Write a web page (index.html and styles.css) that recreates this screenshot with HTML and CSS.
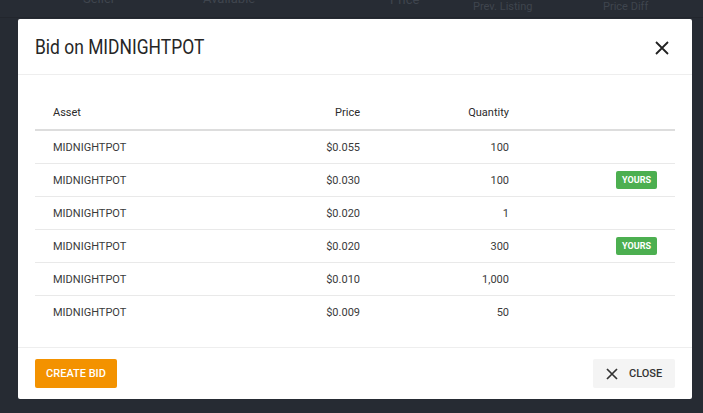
FILE: index.html
```html
<!DOCTYPE html>
<html>
<head>
<meta charset="utf-8">
<link rel="stylesheet" href="styles.css">
</head>
<body>
<div class="bg">
  <div class="bg-head">
    <span class="bh bh-seller">Seller</span>
    <span class="bh bh-avail">Available</span>
    <span class="bh bh-price">Price</span>
    <span class="bh bh-prev">Prev. Listing</span>
    <span class="bh bh-diff">Price Diff</span>
  </div>
</div>
<div class="modal">
  <div class="modal-header">
    <h1 class="title">Bid on MIDNIGHTPOT</h1>
    <svg class="x-icon" width="14" height="14" viewBox="0 0 14 14"><path d="M1 1 L13 13 M13 1 L1 13" stroke="#222" stroke-width="1.8" fill="none"/></svg>
  </div>
  <div class="modal-body">
    <table class="bids">
      <thead>
        <tr><th class="c-asset">Asset</th><th class="c-price">Price</th><th class="c-qty">Quantity</th><th class="c-tag"></th></tr>
      </thead>
      <tbody>
        <tr><td class="c-asset">MIDNIGHTPOT</td><td class="c-price">$0.055</td><td class="c-qty">100</td><td class="c-tag"></td></tr>
        <tr><td class="c-asset">MIDNIGHTPOT</td><td class="c-price">$0.030</td><td class="c-qty">100</td><td class="c-tag"><span class="badge">YOURS</span></td></tr>
        <tr><td class="c-asset">MIDNIGHTPOT</td><td class="c-price">$0.020</td><td class="c-qty">1</td><td class="c-tag"></td></tr>
        <tr><td class="c-asset">MIDNIGHTPOT</td><td class="c-price">$0.020</td><td class="c-qty">300</td><td class="c-tag"><span class="badge">YOURS</span></td></tr>
        <tr><td class="c-asset">MIDNIGHTPOT</td><td class="c-price">$0.010</td><td class="c-qty">1,000</td><td class="c-tag"></td></tr>
        <tr><td class="c-asset">MIDNIGHTPOT</td><td class="c-price">$0.009</td><td class="c-qty">50</td><td class="c-tag"></td></tr>
      </tbody>
    </table>
  </div>
  <div class="modal-footer">
    <button class="btn btn-create">CREATE BID</button>
    <button class="btn btn-close"><svg width="12" height="12" viewBox="0 0 12 12"><path d="M1 1 L11 11 M11 1 L1 11" stroke="#333" stroke-width="1.7" fill="none"/></svg><span>CLOSE</span></button>
  </div>
</div>
</body>
</html>
```

FILE: styles.css
```css
html, body {
  margin: 0;
  padding: 0;
  width: 703px;
  height: 413px;
  overflow: hidden;
  background: #262b33;
  font-family: Roboto, "Liberation Sans", sans-serif;
}
.bg {
  position: absolute;
  left: 0; top: 0; right: 0; bottom: 0;
}
.bg-head {
  height: 17px;
  background: #272c34;
  border-bottom: 1px solid #22262d;
  position: relative;
}
.bh {
  position: absolute;
  color: #3f454e;
  font-size: 12px;
  white-space: nowrap;
}
.bh-seller { left: 83px; top: -9px; font-size: 13px; }
.bh-avail { left: 203px; top: -9px; font-size: 13px; }
.bh-price { left: 390px; top: -8px; font-size: 13px; }
.bh-prev { left: 473px; top: 0px; font-size: 11px; }
.bh-diff { left: 603px; top: 0px; font-size: 11px; }

.modal {
  position: absolute;
  left: 18px;
  top: 19px;
  width: 674px;
  height: 380px;
  background: #fff;
  border-radius: 2px;
  display: flex;
  flex-direction: column;
}
.modal-header {
  height: 56px;
  border-bottom: 1px solid #eee;
  display: flex;
  align-items: center;
  justify-content: space-between;
  padding: 0 23px 0 17px;
  box-sizing: border-box;
  flex: none;
}
.title {
  margin: 0;
  font-size: 21px;
  font-weight: 400;
  color: #262626;
  padding-top: 1px;
  transform: scaleX(0.83);
  transform-origin: left center;
  white-space: nowrap;
}
.x-icon { display: block; margin-top: 2px; }
.modal-body {
  flex: 1;
  padding: 21px 17px 0 17px;
}
.bids {
  width: 100%;
  border-collapse: collapse;
  font-size: 11px;
  color: #3a3a3a;
}
.bids th {
  font-weight: 400;
  height: 33px;
  border-bottom: 2px solid #ddd;
  padding: 0 18px;
  color: #2b2b2b;
}
.bids td {
  height: 32px;
  border-bottom: 1px solid #e9e9e9;
  padding: 0 18px;
}
.bids tbody tr:last-child td { border-bottom: none; }
.c-asset { width: 173px; text-align: left; }
.c-price { width: 98px; text-align: right; }
.c-qty { width: 113px; text-align: right; }
.c-tag { text-align: right; }
.badge {
  display: inline-block;
  background: #4caf50;
  color: #fff;
  font-size: 9px;
  font-weight: 700;
  padding: 0 6px;
  line-height: 18px;
  border-radius: 2px;
  vertical-align: middle;
}
.modal-footer {
  height: 52px;
  border-top: 1px solid #eee;
  display: flex;
  align-items: center;
  justify-content: space-between;
  padding: 0 17px;
  box-sizing: border-box;
  flex: none;
}
.btn {
  border: none;
  height: 29px;
  border-radius: 2px;
  font-family: Roboto, "Liberation Sans", sans-serif;
  font-size: 11px;
  font-weight: 500;
  cursor: pointer;
  display: flex;
  align-items: center;
}
.btn-create {
  background: #f39200;
  color: #fff;
  width: 82px;
  justify-content: center;
  padding: 0;
}
.btn-close {
  background: #f4f4f4;
  color: #333;
  width: 82px;
  padding: 0 0 0 13px;
  gap: 11px;
}
```
